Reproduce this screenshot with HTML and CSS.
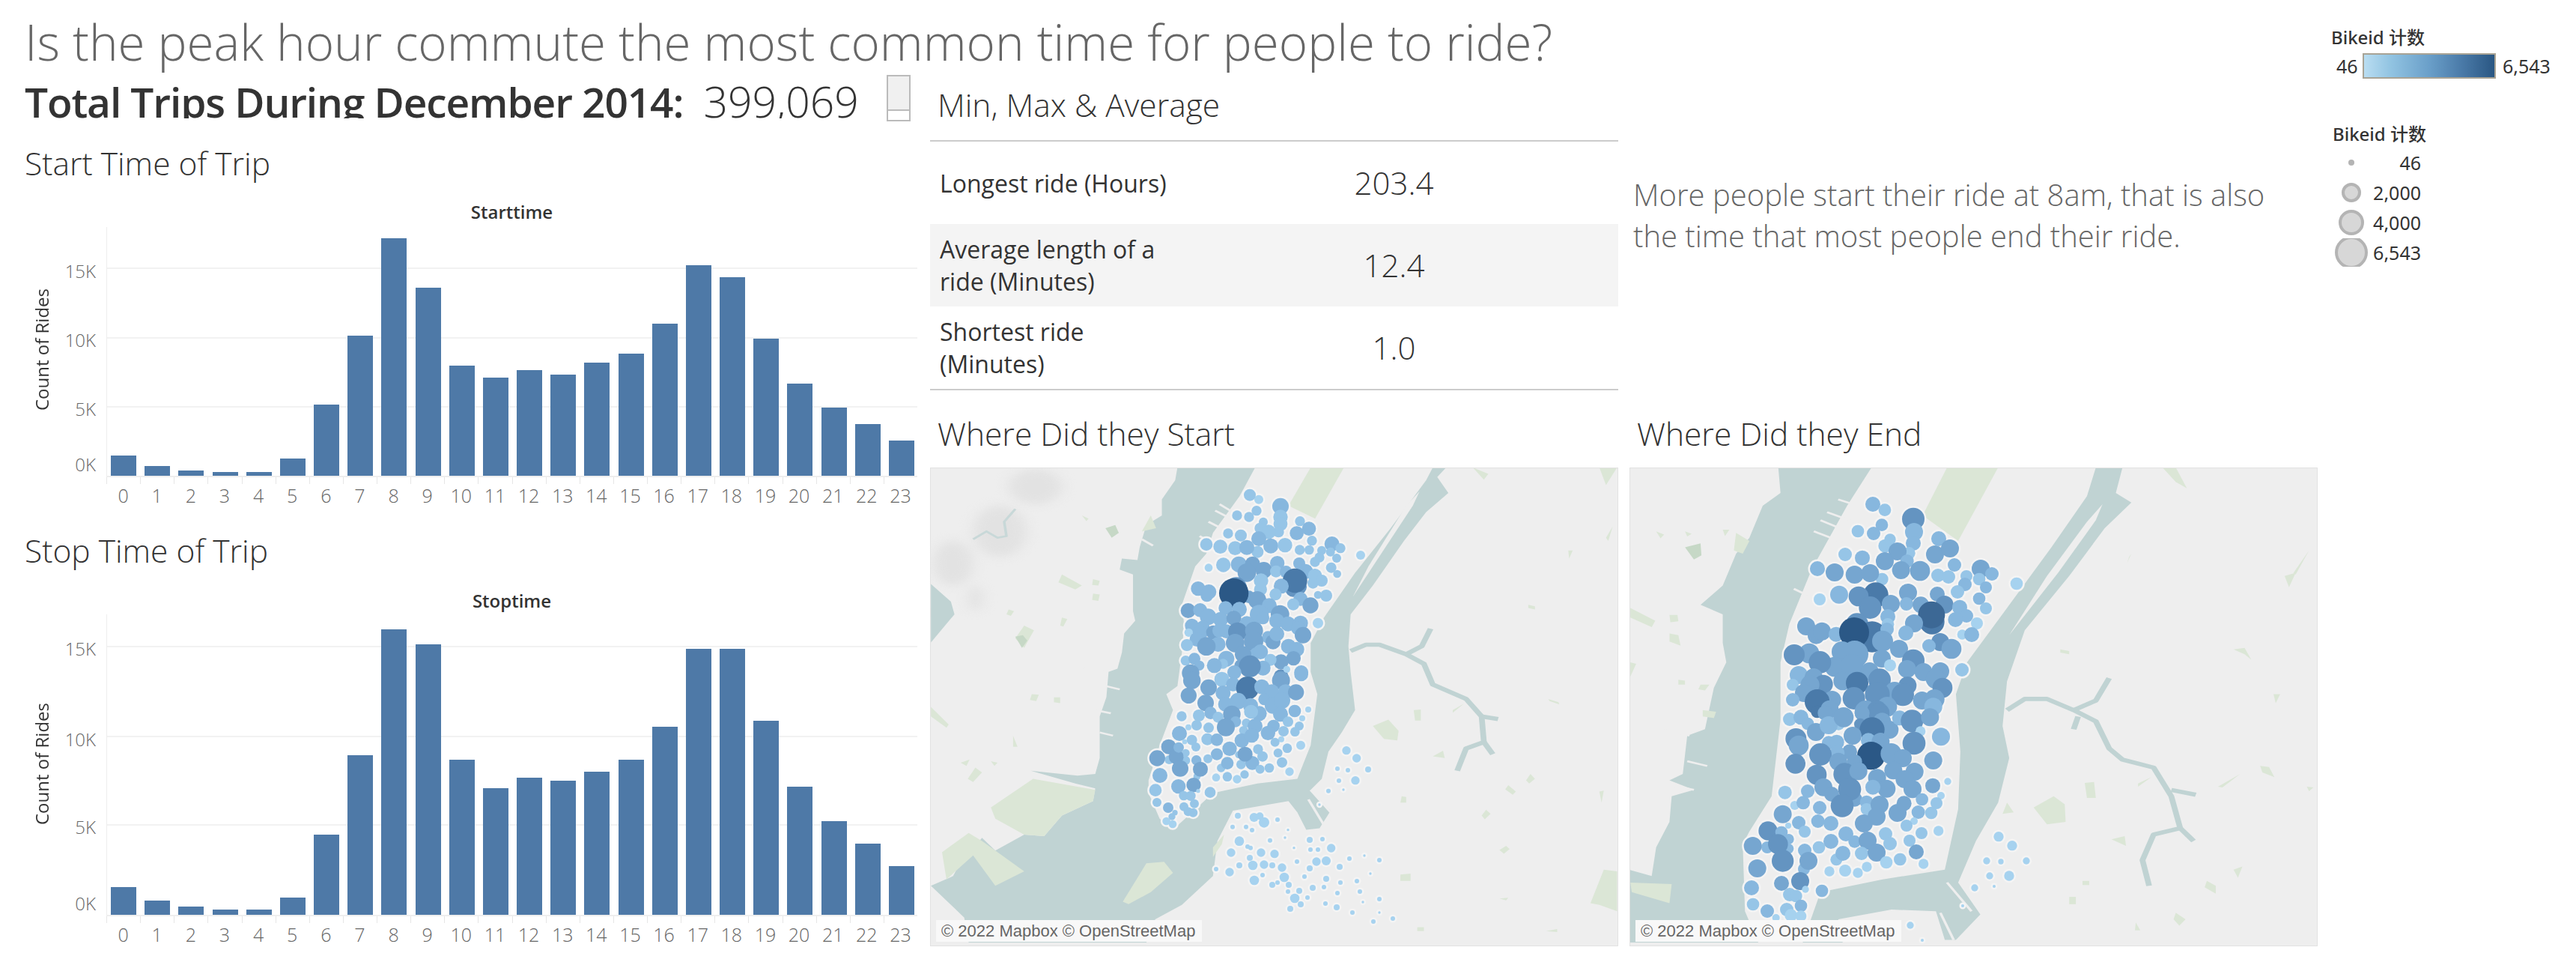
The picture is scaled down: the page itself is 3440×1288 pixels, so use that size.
FILE: index.html
```html
<!DOCTYPE html>
<html lang="en">
<head>
<meta charset="utf-8">
<title>Citi Bike December 2014</title>
<link rel="stylesheet" href="styles.css">
</head>
<body>
<div class="dashboard">
  <main class="main">
    <h1 class="title">Is the peak hour commute the most common time for people to ride?</h1>
    <div class="columns">
      <section class="col-left">
        <div class="total-row">
          <div class="total-text"><b>Total Trips During December 2014:</b><span class="total-num">399,069</span></div>
          <div class="widget"><div class="widget-top"></div></div>
        </div>
        <h2 class="heading h-start">Start Time of Trip</h2>
        <div class="chart-title ct-start">Starttime</div>
        <div class="chart chart-a">
          <div class="y-title"><span>Count of Rides</span></div>
          <div class="y-labels">
            <span style="bottom:256px">15K</span><span style="bottom:164px">10K</span><span style="bottom:72px">5K</span><span style="bottom:-2px">0K</span>
          </div>
          <div class="plot">
            <i class="grid" style="bottom:276px"></i><i class="grid" style="bottom:183px"></i><i class="grid" style="bottom:91px"></i>
            <div class="bars">
              <i style="height:27px"></i><i style="height:13px"></i><i style="height:7px"></i><i style="height:5px"></i><i style="height:5px"></i><i style="height:23px"></i><i style="height:95px"></i><i style="height:187px"></i><i style="height:317px"></i><i style="height:251px"></i><i style="height:147px"></i><i style="height:131px"></i><i style="height:141px"></i><i style="height:135px"></i><i style="height:151px"></i><i style="height:163px"></i><i style="height:203px"></i><i style="height:281px"></i><i style="height:265px"></i><i style="height:183px"></i><i style="height:123px"></i><i style="height:91px"></i><i style="height:69px"></i><i style="height:47px"></i>
            </div>
            <div class="x-labels"><span>0</span><span>1</span><span>2</span><span>3</span><span>4</span><span>5</span><span>6</span><span>7</span><span>8</span><span>9</span><span>10</span><span>11</span><span>12</span><span>13</span><span>14</span><span>15</span><span>16</span><span>17</span><span>18</span><span>19</span><span>20</span><span>21</span><span>22</span><span>23</span></div>
          </div>
        </div>
        <h2 class="heading h-stop">Stop Time of Trip</h2>
        <div class="chart-title ct-stop">Stoptime</div>
        <div class="chart chart-b">
          <div class="y-title"><span>Count of Rides</span></div>
          <div class="y-labels">
            <span style="bottom:338px">15K</span><span style="bottom:217px">10K</span><span style="bottom:100px">5K</span><span style="bottom:-2px">0K</span>
          </div>
          <div class="plot">
            <i class="grid" style="bottom:357px"></i><i class="grid" style="bottom:237px"></i><i class="grid" style="bottom:119px"></i>
            <div class="bars">
              <i style="height:37px"></i><i style="height:19px"></i><i style="height:11px"></i><i style="height:7px"></i><i style="height:7px"></i><i style="height:23px"></i><i style="height:107px"></i><i style="height:213px"></i><i style="height:381px"></i><i style="height:361px"></i><i style="height:207px"></i><i style="height:169px"></i><i style="height:183px"></i><i style="height:179px"></i><i style="height:191px"></i><i style="height:207px"></i><i style="height:251px"></i><i style="height:355px"></i><i style="height:355px"></i><i style="height:259px"></i><i style="height:171px"></i><i style="height:125px"></i><i style="height:95px"></i><i style="height:65px"></i>
            </div>
            <div class="x-labels"><span>0</span><span>1</span><span>2</span><span>3</span><span>4</span><span>5</span><span>6</span><span>7</span><span>8</span><span>9</span><span>10</span><span>11</span><span>12</span><span>13</span><span>14</span><span>15</span><span>16</span><span>17</span><span>18</span><span>19</span><span>20</span><span>21</span><span>22</span><span>23</span></div>
          </div>
        </div>
      </section>

      <section class="col-mid">
        <h2 class="heading h-minmax">Min, Max &amp; Average</h2>
        <div class="stats">
          <div class="stat"><div class="stat-label">Longest ride (Hours)</div><div class="stat-value">203.4</div></div>
          <div class="stat stat-alt"><div class="stat-label">Average length of a ride (Minutes)</div><div class="stat-value">12.4</div></div>
          <div class="stat"><div class="stat-label">Shortest ride (Minutes)</div><div class="stat-value">1.0</div></div>
        </div>
        <h2 class="heading h-where">Where Did they Start</h2>
        <div class="map">
          <svg class="map-svg" viewBox="0 0 919 638" aria-label="Start stations map">
            <defs>
              <g id="start-a" transform="translate(258,16) scale(.33333)">
                <circle class="a" cx="543" cy="80" r="18"/><circle class="b" cx="507" cy="62" r="24"/><circle class="c" cx="630" cy="107" r="33"/><circle class="b" cx="534" cy="125" r="20"/><circle class="b" cx="456" cy="144" r="20"/><circle class="b" cx="504" cy="150" r="20"/><circle class="b" cx="630" cy="150" r="29"/><circle class="b" cx="630" cy="178" r="28"/><circle class="b" cx="561" cy="170" r="18"/><circle class="b" cx="708" cy="167" r="20"/><circle class="b" cx="548" cy="195" r="22"/><circle class="b" cx="622" cy="210" r="22"/><circle class="b" cx="582" cy="210" r="29"/><circle class="c" cx="744" cy="197" r="28"/><circle class="c" cx="695" cy="215" r="28"/><circle class="b" cx="420" cy="216" r="20"/><circle class="b" cx="471" cy="224" r="24"/><circle class="c" cx="543" cy="237" r="30"/><circle class="b" cx="756" cy="245" r="20"/><circle class="c" cx="836" cy="258" r="30"/><circle class="b" cx="333" cy="260" r="25"/><circle class="b" cx="389" cy="269" r="28"/><circle class="b" cx="538" cy="290" r="24"/><circle class="b" cx="448" cy="275" r="28"/><circle class="c" cx="495" cy="272" r="30"/><circle class="c" cx="591" cy="266" r="30"/><circle class="b" cx="648" cy="263" r="29"/><circle class="b" cx="707" cy="282" r="20"/><circle class="b" cx="745" cy="282" r="19"/><circle class="b" cx="795" cy="284" r="18"/><circle class="b" cx="870" cy="275" r="20"/><circle class="b" cx="830" cy="290" r="18"/><circle class="b" cx="855" cy="315" r="18"/><circle class="a" cx="951" cy="303" r="18"/><circle class="b" cx="786" cy="312" r="20"/><circle class="b" cx="768" cy="330" r="20"/><circle class="a" cx="342" cy="353" r="16"/><circle class="b" cx="401" cy="342" r="29"/><circle class="c" cx="463" cy="340" r="32"/><circle class="d" cx="518" cy="338" r="30"/><circle class="c" cx="617" cy="335" r="29"/><circle class="c" cx="705" cy="336" r="24"/><circle class="d" cx="495" cy="373" r="37"/><circle class="d" cx="563" cy="363" r="33"/><circle class="b" cx="612" cy="368" r="24"/><circle class="c" cx="652" cy="370" r="25"/><circle class="c" cx="730" cy="368" r="30"/><circle class="b" cx="833" cy="353" r="21"/><circle class="b" cx="857" cy="378" r="16"/><circle class="b" cx="768" cy="385" r="28"/><circle class="b" cx="760" cy="415" r="22"/><circle class="b" cx="795" cy="405" r="24"/><circle class="e" cx="680" cy="440" r="30"/><circle class="e" cx="705" cy="430" r="30"/><circle class="f" cx="688" cy="405" r="49"/><circle class="b" cx="552" cy="405" r="29"/><circle class="c" cx="633" cy="427" r="30"/><circle class="c" cx="300" cy="437" r="29"/><circle class="c" cx="335" cy="465" r="25"/><circle class="c" cx="343" cy="450" r="30"/><circle class="e" cx="452" cy="435" r="44"/><circle class="b" cx="550" cy="440" r="26"/><circle class="b" cx="610" cy="460" r="24"/><circle class="b" cx="780" cy="462" r="16"/><circle class="b" cx="813" cy="465" r="24"/><circle class="d" cx="503" cy="470" r="25"/><circle class="g" cx="443" cy="455" r="59"/><circle class="d" cx="537" cy="483" r="36"/><circle class="c" cx="710" cy="478" r="28"/><circle class="b" cx="681" cy="500" r="24"/><circle class="d" cx="750" cy="504" r="32"/><circle class="c" cx="585" cy="505" r="30"/><circle class="d" cx="628" cy="540" r="37"/><circle class="d" cx="260" cy="525" r="30"/><circle class="c" cx="308" cy="523" r="28"/><circle class="c" cx="340" cy="550" r="33"/><circle class="c" cx="410" cy="515" r="28"/><circle class="c" cx="465" cy="520" r="30"/><circle class="c" cx="390" cy="560" r="30"/><circle class="d" cx="443" cy="555" r="30"/><circle class="c" cx="545" cy="540" r="38"/><circle class="c" cx="495" cy="575" r="28"/><circle class="c" cx="560" cy="555" r="25"/><circle class="c" cx="615" cy="566" r="30"/><circle class="c" cx="660" cy="578" r="30"/><circle class="c" cx="710" cy="575" r="30"/><circle class="a" cx="780" cy="575" r="21"/><circle class="c" cx="275" cy="585" r="28"/><circle class="c" cx="320" cy="590" r="26"/><circle class="a" cx="262" cy="613" r="17"/><circle class="c" cx="308" cy="615" r="30"/><circle class="d" cx="360" cy="612" r="28"/><circle class="c" cx="295" cy="640" r="29"/><circle class="c" cx="385" cy="605" r="28"/><circle class="c" cx="413" cy="608" r="28"/><circle class="e" cx="458" cy="610" r="38"/><circle class="d" cx="524" cy="605" r="36"/><circle class="c" cx="580" cy="632" r="25"/><circle class="d" cx="600" cy="650" r="30"/><circle class="c" cx="615" cy="618" r="30"/><circle class="c" cx="700" cy="595" r="28"/><circle class="d" cx="720" cy="623" r="33"/><circle class="d" cx="448" cy="655" r="37"/><circle class="d" cx="522" cy="648" r="39"/><circle class="c" cx="380" cy="660" r="30"/><circle class="d" cx="333" cy="668" r="37"/><circle class="b" cx="255" cy="663" r="24"/><circle class="c" cx="662" cy="668" r="30"/><circle class="c" cx="695" cy="680" r="30"/><circle class="c" cx="530" cy="695" r="22"/><circle class="c" cx="550" cy="690" r="30"/><circle class="d" cx="480" cy="700" r="33"/><circle class="d" cx="682" cy="716" r="29"/><circle class="d" cx="632" cy="730" r="30"/><circle class="b" cx="590" cy="722" r="24"/><circle class="b" cx="250" cy="725" r="20"/><circle class="c" cx="285" cy="718" r="24"/><circle class="c" cx="413" cy="718" r="32"/><circle class="b" cx="400" cy="738" r="20"/><circle class="c" cx="305" cy="745" r="20"/><circle class="c" cx="365" cy="745" r="30"/><circle class="d" cx="470" cy="745" r="25"/><circle class="c" cx="560" cy="755" r="30"/><circle class="e" cx="507" cy="748" r="44"/><circle class="d" cx="270" cy="775" r="35"/><circle class="c" cx="445" cy="772" r="28"/><circle class="c" cx="713" cy="772" r="28"/><circle class="e" cx="632" cy="790" r="30"/><circle class="a" cx="655" cy="760" r="14"/>
              </g>
              <g id="start-b" transform="translate(258,276) scale(.33333)">
                <circle class="d" cx="275" cy="25" r="35"/><circle class="d" cx="342" cy="53" r="33"/><circle class="b" cx="395" cy="20" r="30"/><circle class="c" cx="400" cy="75" r="30"/><circle class="d" cx="262" cy="85" r="32"/><circle class="d" cx="330" cy="115" r="33"/><circle class="c" cx="440" cy="40" r="28"/><circle class="c" cx="410" cy="120" r="30"/><circle class="f" cx="498" cy="55" r="46"/><circle class="c" cx="555" cy="50" r="30"/><circle class="d" cx="632" cy="25" r="36"/><circle class="c" cx="713" cy="0" r="28"/><circle class="c" cx="460" cy="107" r="33"/><circle class="c" cx="595" cy="70" r="30"/><circle class="c" cx="650" cy="70" r="30"/><circle class="d" cx="692" cy="72" r="32"/><circle class="c" cx="565" cy="100" r="24"/><circle class="c" cx="600" cy="125" r="33"/><circle class="c" cx="636" cy="105" r="33"/><circle class="c" cx="510" cy="125" r="30"/><circle class="c" cx="545" cy="157" r="30"/><circle class="b" cx="512" cy="150" r="28"/><circle class="c" cx="687" cy="147" r="25"/><circle class="a" cx="741" cy="141" r="12"/><circle class="c" cx="630" cy="160" r="30"/><circle class="d" cx="435" cy="160" r="35"/><circle class="c" cx="350" cy="155" r="25"/><circle class="b" cx="303" cy="165" r="24"/><circle class="b" cx="380" cy="172" r="22"/><circle class="b" cx="234" cy="168" r="20"/><circle class="a" cx="717" cy="176" r="12"/><circle class="b" cx="660" cy="190" r="21"/><circle class="b" cx="493" cy="195" r="18"/><circle class="c" cx="450" cy="190" r="22"/><circle class="a" cx="261" cy="212" r="12"/><circle class="b" cx="294" cy="204" r="21"/><circle class="b" cx="342" cy="214" r="21"/><circle class="d" cx="411" cy="212" r="36"/><circle class="b" cx="482" cy="225" r="18"/><circle class="c" cx="528" cy="207" r="30"/><circle class="c" cx="602" cy="207" r="25"/><circle class="b" cx="705" cy="207" r="18"/><circle class="c" cx="225" cy="237" r="30"/><circle class="b" cx="642" cy="228" r="21"/><circle class="b" cx="688" cy="230" r="19"/><circle class="c" cx="580" cy="235" r="29"/><circle class="c" cx="475" cy="265" r="29"/><circle class="c" cx="515" cy="245" r="29"/><circle class="a" cx="633" cy="260" r="12"/><circle class="b" cx="608" cy="272" r="18"/><circle class="b" cx="275" cy="263" r="21"/><circle class="b" cx="337" cy="260" r="24"/><circle class="c" cx="375" cy="262" r="25"/><circle class="a" cx="246" cy="270" r="10"/><circle class="d" cx="182" cy="290" r="30"/><circle class="b" cx="184" cy="342" r="18"/><circle class="b" cx="250" cy="315" r="16"/><circle class="b" cx="250" cy="345" r="18"/><circle class="d" cx="212" cy="330" r="30"/><circle class="c" cx="222" cy="293" r="21"/><circle class="b" cx="291" cy="291" r="18"/><circle class="c" cx="426" cy="298" r="29"/><circle class="a" cx="711" cy="284" r="18"/><circle class="b" cx="657" cy="296" r="19"/><circle class="b" cx="540" cy="300" r="20"/><circle class="b" cx="620" cy="315" r="18"/><circle class="d" cx="136" cy="336" r="32"/><circle class="c" cx="375" cy="320" r="24"/><circle class="b" cx="462" cy="322" r="14"/><circle class="b" cx="339" cy="338" r="18"/><circle class="b" cx="558" cy="329" r="21"/><circle class="b" cx="472" cy="361" r="19"/><circle class="c" cx="517" cy="355" r="28"/><circle class="d" cx="488" cy="320" r="30"/><circle class="c" cx="293" cy="344" r="20"/><circle class="b" cx="636" cy="353" r="21"/><circle class="b" cx="392" cy="375" r="17"/><circle class="c" cx="417" cy="356" r="25"/><circle class="b" cx="295" cy="410" r="14"/><circle class="d" cx="228" cy="377" r="33"/><circle class="d" cx="309" cy="380" r="30"/><circle class="b" cx="585" cy="375" r="19"/><circle class="b" cx="548" cy="380" r="18"/><circle class="c" cx="147" cy="405" r="30"/><circle class="a" cx="666" cy="390" r="17"/><circle class="b" cx="417" cy="410" r="19"/><circle class="b" cx="486" cy="401" r="17"/><circle class="a" cx="456" cy="420" r="17"/><circle class="a" cx="372" cy="413" r="16"/><circle class="c" cx="221" cy="449" r="29"/><circle class="d" cx="282" cy="443" r="29"/><circle class="b" cx="129" cy="464" r="25"/><circle class="b" cx="348" cy="473" r="22"/><circle class="a" cx="300" cy="467" r="8"/><circle class="b" cx="242" cy="486" r="19"/><circle class="b" cx="270" cy="487" r="20"/><circle class="b" cx="135" cy="513" r="18"/><circle class="b" cx="285" cy="518" r="18"/><circle class="c" cx="180" cy="534" r="21"/><circle class="b" cx="243" cy="530" r="18"/><circle class="b" cx="260" cy="550" r="18"/><circle class="b" cx="280" cy="554" r="18"/><circle class="b" cx="207" cy="554" r="11"/><circle class="b" cx="195" cy="570" r="14"/><circle class="a" cx="173" cy="588" r="16"/><circle class="a" cx="198" cy="600" r="16"/>
                <circle class="a" cx="894" cy="305" r="17"/><circle class="a" cx="935" cy="336" r="17"/><circle class="a" cx="981" cy="381" r="12"/><circle class="a" cx="858" cy="378" r="9"/><circle class="a" cx="900" cy="384" r="9"/><circle class="a" cx="864" cy="426" r="9"/><circle class="a" cx="930" cy="425" r="17"/><circle class="a" cx="822" cy="467" r="9"/><circle class="a" cx="882" cy="462" r="5"/><circle class="a" cx="786" cy="522" r="5"/><circle class="a" cx="459" cy="566" r="12"/><circle class="a" cx="524" cy="573" r="18"/><circle class="a" cx="547" cy="568" r="15"/><circle class="a" cx="564" cy="593" r="21"/><circle class="a" cx="618" cy="582" r="9"/><circle class="a" cx="438" cy="611" r="9"/><circle class="a" cx="492" cy="611" r="9"/><circle class="a" cx="516" cy="624" r="9"/><circle class="a" cx="660" cy="623" r="5"/><circle class="a" cx="648" cy="654" r="5"/><circle class="a" cx="588" cy="665" r="9"/><circle class="a" cx="465" cy="668" r="19"/><circle class="a" cx="747" cy="663" r="12"/><circle class="a" cx="798" cy="660" r="9"/><circle class="a" cx="498" cy="690" r="9"/><circle class="a" cx="510" cy="695" r="9"/><circle class="a" cx="684" cy="695" r="5"/><circle class="a" cx="750" cy="702" r="9"/><circle class="a" cx="780" cy="702" r="9"/><circle class="a" cx="833" cy="696" r="17"/><circle class="a" cx="432" cy="714" r="17"/><circle class="a" cx="552" cy="714" r="17"/><circle class="a" cx="606" cy="719" r="17"/><circle class="a" cx="507" cy="735" r="12"/><circle class="a" cx="696" cy="750" r="9"/><circle class="a" cx="774" cy="750" r="17"/><circle class="a" cx="813" cy="747" r="18"/><circle class="a" cx="906" cy="738" r="9"/><circle class="a" cx="966" cy="726" r="5"/><circle class="a" cx="1026" cy="744" r="9"/><circle class="a" cx="465" cy="765" r="12"/><circle class="a" cx="519" cy="765" r="19"/><circle class="a" cx="564" cy="762" r="17"/><circle class="a" cx="597" cy="765" r="12"/><circle class="a" cx="636" cy="774" r="17"/><circle class="a" cx="372" cy="780" r="9"/><circle class="a" cx="747" cy="777" r="12"/><circle class="a" cx="867" cy="771" r="12"/><circle class="a" cx="426" cy="792" r="17"/><circle class="a" cx="558" cy="804" r="9"/><circle class="a" cx="645" cy="813" r="19"/><circle class="a" cx="726" cy="810" r="9"/><circle class="a" cx="813" cy="819" r="12"/><circle class="a" cx="990" cy="798" r="5"/><circle class="a" cx="525" cy="825" r="19"/><circle class="a" cx="618" cy="834" r="9"/><circle class="a" cx="597" cy="843" r="12"/><circle class="a" cx="663" cy="843" r="12"/><circle class="a" cx="759" cy="855" r="12"/><circle class="a" cx="804" cy="852" r="9"/><circle class="a" cx="870" cy="834" r="9"/><circle class="a" cx="936" cy="828" r="9"/><circle class="a" cx="660" cy="870" r="9"/><circle class="a" cx="705" cy="867" r="12"/><circle class="a" cx="858" cy="876" r="9"/><circle class="a" cx="948" cy="870" r="9"/><circle class="a" cx="687" cy="897" r="19"/><circle class="a" cx="738" cy="894" r="9"/><circle class="a" cx="1026" cy="900" r="9"/><circle class="a" cx="960" cy="912" r="5"/><circle class="a" cx="810" cy="918" r="9"/><circle class="a" cx="711" cy="921" r="12"/><circle class="a" cx="669" cy="939" r="12"/><circle class="a" cx="855" cy="933" r="12"/><circle class="a" cx="918" cy="954" r="9"/><circle class="a" cx="1026" cy="954" r="5"/><circle class="a" cx="1080" cy="978" r="9"/><circle class="a" cx="1002" cy="990" r="9"/>
              </g>
            </defs>
            <g transform="translate(-1.8,-4.3) scale(.5931,.4261)">
              <g class="shade">
                <ellipse cx="240" cy="70" rx="60" ry="55"/><ellipse cx="160" cy="210" rx="60" ry="80"/><ellipse cx="55" cy="310" rx="45" ry="70"/><ellipse cx="105" cy="420" rx="15" ry="40"/>
              </g>
              <polygon class="water" points="560,10 555,50 525,110 525,160 490,190 475,260 470,300 435,295 430,330 460,345 460,460 465,490 440,530 435,590 425,640 405,650 400,730 385,790 385,920 375,970 335,975 230,960 330,1000 375,1015 370,1055 300,1100 260,1165 215,1160 150,1210 120,1170 90,1220 70,1250 55,1290 5,1320 80,1420 90,1498 490,1498 510,1425 570,1380 640,1290 650,1180 685,1085 810,1055 830,1090 850,1145 880,1140 905,1085 860,1020 885,985 900,900 930,840 960,770 950,650 945,570 950,470 1000,380 1070,240 1120,150 1170,90 1145,40 1165,10"/>
              <polygon class="land" points="735,10 700,100 640,215 625,280 600,320 570,440 575,500 570,590 560,695 535,720 550,770 520,880 495,990 495,1030 520,1110 550,1145 640,1030 740,1000 830,985 860,880 875,720 860,650 860,560 890,480 960,340 1040,200 1120,50 1135,10"/>
              <polygon class="land" points="1105,85 1090,130 1000,320 955,415 990,320 1075,130"/>
              <polygon class="water" points="5,375 50,430 58,470 5,558"/>
              <g class="creek">
                <polyline points="950,585 985,565 1015,565 1075,595 1115,625 1135,690 1210,735 1245,790 1250,870 1210,890 1190,960"/>
                <polyline points="1075,595 1110,570 1130,515"/>
                <polyline points="1250,870 1270,908"/>
                <polyline points="1245,790 1282,798"/>
                <polyline class="thin" points="100,235 130,210 155,230 175,225 170,180 195,140"/>
              </g>
              <g class="piers">
                <polyline points="655,125 685,150"/><polyline points="645,145 680,170"/><polyline points="630,180 665,205"/><polyline points="610,225 640,250"/><polyline points="480,235 505,255"/><polyline points="350,640 400,650"/><polyline points="400,695 430,705"/><polyline points="375,770 410,780"/><polyline points="385,840 415,850"/><polyline points="860,1020 905,1090"/><polyline points="855,1050 890,1130"/>
              </g>
              <g class="park">
                <polygon points="860,10 935,10 870,170 810,130"/><polygon points="437,1370 490,1250 530,1245 550,1280 500,1340 450,1378"/><polygon points="140,1075 235,985 375,1020 370,1055 300,1100 260,1165 215,1160 150,1110"/><polygon points="30,1215 90,1155 120,1180 215,1275 150,1320 100,1225 40,1300"/><polygon points="5,760 45,815 40,825 5,790"/><polygon points="300,345 345,380 330,392 292,370"/><polygon points="345,160 360,170 355,178"/><polygon points="215,505 237,520 215,575 195,545"/><polygon points="180,455 192,460 185,475 175,470"/><polygon points="300,480 312,485 303,508 296,505"/><polygon points="370,360 385,365 382,380 368,378"/><polygon points="370,405 385,408 382,428 368,425"/><polygon points="232,720 248,722 242,742 228,738"/><polygon points="282,730 296,730 296,748 282,745"/><polygon points="190,850 200,885 190,885"/><polygon points="72,935 92,925 85,945"/><polygon points="140,930 155,935 148,945"/><polygon points="105,950 120,965 100,995 88,985"/><polygon points="500,160 512,200 480,210"/><polygon points="1000,820 1035,800 1058,835 1055,865 1025,860"/><polygon points="1092,770 1108,768 1108,803 1095,803"/><polygon points="1180,770 1205,750 1180,778"/><polygon points="1135,915 1158,897 1162,920"/><polygon points="1395,735 1418,745 1420,752 1398,742"/><polygon points="1350,440 1365,445 1365,455 1350,450"/><polygon points="1305,1005 1322,1025 1315,1035 1298,1018"/><polygon points="1355,970 1365,985 1352,1000 1345,990"/><polygon points="1255,1082 1265,1095 1252,1112 1245,1100"/><polygon points="1300,1195 1308,1205 1295,1220 1285,1208"/><polygon points="1065,1040 1075,1042 1075,1060 1062,1060"/><polygon points="1062,1285 1085,1282 1085,1305 1062,1305"/><polygon points="1490,1375 1520,1270 1550,1275 1550,1400 1510,1380"/><polygon points="1510,1025 1520,1022 1515,1060"/><polygon points="1440,270 1450,270 1442,295"/><polygon points="1525,230 1540,195 1530,240"/><polygon points="1510,10 1550,10 1525,65"/><polygon points="1225,10 1260,30 1250,48"/><polygon points="640,1200 665,1160 660,1190 640,1230"/><polygon points="1285,1360 1305,1358 1300,1366"/><polygon points="1390,1462 1415,1456 1415,1465"/><polygon points="1100,1450 1115,1450 1115,1462 1100,1462"/><polygon class="park-dark" points="398,200 420,190 428,215 412,230"/><polygon class="park-dark" points="195,540 212,535 222,552 210,575"/>
              </g>
            </g>
            <use href="#start-a" class="halo"/><use href="#start-b" class="halo"/>
            <use href="#start-a"/><use href="#start-b"/>
          </svg>
          <div class="attrib">© 2022 Mapbox © OpenStreetMap</div>
        </div>
      </section>

      <section class="col-right">
        <p class="note">More people start their ride at 8am, that is also the time that most people end their ride.</p>
        <h2 class="heading h-where">Where Did they End</h2>
        <div class="map">
          <svg class="map-svg" viewBox="0 0 919 638" aria-label="End stations map">
            <defs>
              <g id="end-a" transform="translate(134,26) scale(.33333)">
                <circle class="c" cx="573" cy="69" r="30"/><circle class="b" cx="621" cy="92" r="25"/><circle class="e" cx="735" cy="128" r="45"/><circle class="c" cx="609" cy="152" r="25"/><circle class="c" cx="738" cy="180" r="36"/><circle class="b" cx="513" cy="177" r="25"/><circle class="c" cx="576" cy="186" r="27"/><circle class="b" cx="642" cy="210" r="23"/><circle class="b" cx="622" cy="236" r="27"/><circle class="c" cx="735" cy="225" r="30"/><circle class="c" cx="837" cy="207" r="30"/><circle class="d" cx="822" cy="270" r="36"/><circle class="d" cx="882" cy="246" r="36"/><circle class="b" cx="718" cy="265" r="25"/><circle class="d" cx="672" cy="258" r="36"/><circle class="b" cx="462" cy="270" r="27"/><circle class="c" cx="531" cy="284" r="30"/><circle class="c" cx="710" cy="297" r="27"/><circle class="d" cx="621" cy="297" r="36"/><circle class="c" cx="900" cy="312" r="27"/><circle class="d" cx="1005" cy="327" r="36"/><circle class="c" cx="1050" cy="348" r="27"/><circle class="c" cx="351" cy="327" r="30"/><circle class="d" cx="420" cy="342" r="36"/><circle class="b" cx="610" cy="369" r="25"/><circle class="d" cx="500" cy="351" r="36"/><circle class="d" cx="562" cy="345" r="36"/><circle class="d" cx="686" cy="333" r="36"/><circle class="d" cx="762" cy="336" r="40"/><circle class="b" cx="834" cy="354" r="27"/><circle class="b" cx="876" cy="360" r="27"/><circle class="b" cx="948" cy="357" r="24"/><circle class="c" cx="942" cy="390" r="27"/><circle class="b" cx="999" cy="369" r="25"/><circle class="a" cx="1149" cy="387" r="25"/><circle class="c" cx="1026" cy="402" r="24"/><circle class="b" cx="912" cy="420" r="27"/><circle class="c" cx="438" cy="431" r="36"/><circle class="f" cx="585" cy="432" r="50"/><circle class="e" cx="516" cy="438" r="40"/><circle class="a" cx="360" cy="450" r="24"/><circle class="d" cx="714" cy="423" r="36"/><circle class="d" cx="831" cy="429" r="30"/><circle class="c" cx="999" cy="447" r="25"/><circle class="e" cx="562" cy="483" r="45"/><circle class="d" cx="645" cy="468" r="36"/><circle class="c" cx="708" cy="468" r="27"/><circle class="d" cx="765" cy="472" r="33"/><circle class="e" cx="860" cy="471" r="36"/><circle class="c" cx="921" cy="482" r="30"/><circle class="b" cx="1026" cy="486" r="24"/><circle class="e" cx="510" cy="550" r="45"/><circle class="f" cx="570" cy="600" r="62"/><circle class="f" cx="810" cy="540" r="50"/><circle class="h" cx="808" cy="512" r="54"/><circle class="c" cx="633" cy="519" r="30"/><circle class="c" cx="948" cy="516" r="27"/><circle class="c" cx="904" cy="531" r="30"/><circle class="b" cx="633" cy="550" r="25"/><circle class="c" cx="630" cy="570" r="27"/><circle class="d" cx="738" cy="546" r="36"/><circle class="a" cx="990" cy="546" r="24"/><circle class="d" cx="306" cy="558" r="36"/><circle class="d" cx="346" cy="595" r="34"/><circle class="d" cx="369" cy="578" r="36"/><circle class="c" cx="426" cy="590" r="30"/><circle class="g" cx="498" cy="582" r="60"/><circle class="c" cx="705" cy="585" r="30"/><circle class="a" cx="931" cy="591" r="20"/><circle class="c" cx="969" cy="591" r="30"/><circle class="d" cx="612" cy="617" r="42"/><circle class="e" cx="843" cy="621" r="36"/><circle class="c" cx="798" cy="636" r="27"/><circle class="d" cx="888" cy="648" r="40"/><circle class="d" cx="678" cy="648" r="36"/><circle class="d" cx="318" cy="666" r="40"/><circle class="e" cx="258" cy="672" r="42"/><circle class="d" cx="450" cy="660" r="42"/><circle class="d" cx="500" cy="670" r="55"/><circle class="d" cx="609" cy="687" r="36"/><circle class="a" cx="642" cy="714" r="24"/><circle class="e" cx="735" cy="695" r="45"/><circle class="d" cx="420" cy="720" r="40"/><circle class="e" cx="361" cy="702" r="45"/><circle class="d" cx="490" cy="715" r="45"/><circle class="d" cx="710" cy="729" r="36"/><circle class="d" cx="776" cy="741" r="36"/><circle class="d" cx="843" cy="738" r="36"/><circle class="b" cx="930" cy="732" r="27"/><circle class="c" cx="276" cy="753" r="36"/><circle class="d" cx="336" cy="762" r="36"/><circle class="d" cx="825" cy="768" r="40"/><circle class="d" cx="560" cy="738" r="36"/><circle class="b" cx="252" cy="792" r="24"/><circle class="e" cx="375" cy="790" r="38"/><circle class="d" cx="321" cy="792" r="38"/><circle class="d" cx="452" cy="777" r="37"/><circle class="f" cx="510" cy="785" r="45"/><circle class="e" cx="600" cy="772" r="45"/><circle class="e" cx="712" cy="795" r="36"/><circle class="e" cx="852" cy="804" r="40"/><circle class="d" cx="297" cy="825" r="36"/><circle class="c" cx="252" cy="852" r="27"/><circle class="e" cx="497" cy="846" r="45"/><circle class="d" cx="660" cy="820" r="40"/><circle class="e" cx="693" cy="832" r="45"/><circle class="e" cx="591" cy="830" r="50"/><circle class="d" cx="770" cy="855" r="36"/><circle class="d" cx="820" cy="850" r="40"/><circle class="d" cx="410" cy="852" r="36"/><circle class="f" cx="350" cy="860" r="50"/><circle class="c" cx="815" cy="880" r="36"/><circle class="d" cx="630" cy="880" r="40"/><circle class="d" cx="400" cy="890" r="36"/><circle class="d" cx="545" cy="900" r="45"/><circle class="e" cx="590" cy="895" r="40"/>
              </g>
              <g id="end-b" transform="translate(134,326) scale(.33333)">
                <circle class="e" cx="600" cy="5" r="40"/><circle class="d" cx="530" cy="5" r="30"/><circle class="f" cx="350" cy="0" r="25"/><circle class="d" cx="382" cy="5" r="30"/><circle class="b" cx="240" cy="30" r="27"/><circle class="c" cx="285" cy="22" r="30"/><circle class="c" cx="312" cy="48" r="25"/><circle class="d" cx="345" cy="81" r="36"/><circle class="b" cx="436" cy="50" r="24"/><circle class="c" cx="396" cy="54" r="36"/><circle class="d" cx="456" cy="22" r="40"/><circle class="e" cx="265" cy="108" r="42"/><circle class="d" cx="276" cy="135" r="40"/><circle class="e" cx="522" cy="50" r="24"/><circle class="d" cx="610" cy="40" r="36"/><circle class="d" cx="640" cy="72" r="36"/><circle class="f" cx="570" cy="72" r="50"/><circle class="c" cx="680" cy="25" r="30"/><circle class="e" cx="730" cy="37" r="45"/><circle class="d" cx="802" cy="22" r="36"/><circle class="a" cx="764" cy="78" r="20"/><circle class="c" cx="846" cy="100" r="36"/><circle class="d" cx="492" cy="96" r="36"/><circle class="c" cx="555" cy="115" r="30"/><circle class="d" cx="604" cy="120" r="36"/><circle class="e" cx="738" cy="126" r="46"/><circle class="c" cx="396" cy="124" r="27"/><circle class="c" cx="428" cy="122" r="30"/><circle class="d" cx="480" cy="160" r="30"/><circle class="c" cx="430" cy="165" r="30"/><circle class="e" cx="363" cy="171" r="45"/><circle class="g" cx="566" cy="176" r="56"/><circle class="d" cx="646" cy="168" r="42"/><circle class="d" cx="693" cy="186" r="36"/><circle class="d" cx="500" cy="200" r="30"/><circle class="d" cx="435" cy="200" r="36"/><circle class="d" cx="815" cy="195" r="36"/><circle class="e" cx="263" cy="208" r="40"/><circle class="d" cx="655" cy="235" r="36"/><circle class="e" cx="460" cy="250" r="45"/><circle class="d" cx="515" cy="238" r="36"/><circle class="d" cx="740" cy="240" r="36"/><circle class="e" cx="348" cy="252" r="40"/><circle class="d" cx="700" cy="270" r="36"/><circle class="d" cx="590" cy="265" r="36"/><circle class="d" cx="813" cy="296" r="30"/><circle class="a" cx="873" cy="279" r="14"/><circle class="d" cx="375" cy="302" r="36"/><circle class="d" cx="408" cy="330" r="30"/><circle class="d" cx="500" cy="350" r="30"/><circle class="e" cx="480" cy="310" r="46"/><circle class="d" cx="628" cy="308" r="36"/><circle class="c" cx="573" cy="302" r="30"/><circle class="d" cx="732" cy="310" r="36"/><circle class="b" cx="221" cy="323" r="27"/><circle class="c" cx="312" cy="318" r="27"/><circle class="a" cx="846" cy="336" r="15"/><circle class="e" cx="450" cy="376" r="46"/><circle class="c" cx="770" cy="351" r="25"/><circle class="b" cx="828" cy="366" r="24"/><circle class="a" cx="260" cy="375" r="18"/><circle class="c" cx="294" cy="364" r="27"/><circle class="c" cx="360" cy="384" r="27"/><circle class="c" cx="548" cy="362" r="27"/><circle class="b" cx="548" cy="390" r="24"/><circle class="d" cx="600" cy="372" r="36"/><circle class="d" cx="672" cy="405" r="36"/><circle class="d" cx="698" cy="367" r="30"/><circle class="d" cx="212" cy="410" r="36"/><circle class="d" cx="588" cy="420" r="36"/><circle class="c" cx="755" cy="402" r="27"/><circle class="b" cx="807" cy="405" r="25"/><circle class="d" cx="537" cy="447" r="36"/><circle class="c" cx="353" cy="438" r="27"/><circle class="c" cx="405" cy="447" r="30"/><circle class="c" cx="276" cy="444" r="27"/><circle class="a" cx="738" cy="438" r="15"/><circle class="b" cx="708" cy="456" r="24"/><circle class="a" cx="234" cy="456" r="12"/><circle class="e" cx="153" cy="477" r="38"/><circle class="c" cx="207" cy="483" r="25"/><circle class="b" cx="300" cy="480" r="24"/><circle class="c" cx="465" cy="489" r="30"/><circle class="b" cx="768" cy="486" r="24"/><circle class="b" cx="624" cy="489" r="27"/><circle class="a" cx="836" cy="477" r="20"/><circle class="c" cx="236" cy="510" r="21"/><circle class="b" cx="720" cy="516" r="24"/><circle class="b" cx="642" cy="528" r="27"/><circle class="c" cx="500" cy="520" r="25"/><circle class="c" cx="405" cy="519" r="30"/><circle class="d" cx="552" cy="516" r="36"/><circle class="c" cx="150" cy="543" r="24"/><circle class="c" cx="236" cy="548" r="20"/><circle class="e" cx="193" cy="530" r="40"/><circle class="b" cx="357" cy="543" r="25"/><circle class="d" cx="92" cy="537" r="36"/><circle class="c" cx="300" cy="555" r="27"/><circle class="d" cx="747" cy="561" r="30"/><circle class="b" cx="427" cy="592" r="24"/><circle class="c" cx="453" cy="567" r="30"/><circle class="b" cx="528" cy="567" r="27"/><circle class="d" cx="588" cy="564" r="36"/><circle class="c" cx="297" cy="630" r="24"/><circle class="e" cx="212" cy="597" r="44"/><circle class="d" cx="315" cy="597" r="36"/><circle class="b" cx="682" cy="591" r="25"/><circle class="a" cx="627" cy="603" r="25"/><circle class="d" cx="110" cy="627" r="36"/><circle class="a" cx="776" cy="609" r="20"/><circle class="a" cx="462" cy="636" r="24"/><circle class="a" cx="549" cy="621" r="20"/><circle class="a" cx="399" cy="639" r="20"/><circle class="a" cx="513" cy="645" r="20"/><circle class="e" cx="282" cy="678" r="36"/><circle class="d" cx="207" cy="687" r="30"/><circle class="c" cx="87" cy="705" r="30"/><circle class="c" cx="369" cy="717" r="25"/><circle class="a" cx="303" cy="711" r="14"/><circle class="b" cx="240" cy="732" r="27"/><circle class="b" cx="265" cy="738" r="25"/><circle class="b" cx="93" cy="771" r="25"/><circle class="c" cx="285" cy="777" r="25"/><circle class="b" cx="228" cy="792" r="27"/><circle class="c" cx="150" cy="798" r="27"/><circle class="a" cx="245" cy="815" r="25"/><circle class="a" cx="285" cy="818" r="22"/><circle class="a" cx="185" cy="825" r="15"/>
                <circle class="a" cx="1077" cy="500" r="20"/><circle class="a" cx="1131" cy="536" r="20"/><circle class="a" cx="1029" cy="597" r="14"/><circle class="a" cx="1086" cy="600" r="11"/><circle class="a" cx="1188" cy="597" r="14"/><circle class="a" cx="1041" cy="657" r="14"/><circle class="a" cx="1119" cy="657" r="20"/><circle class="a" cx="981" cy="705" r="14"/><circle class="a" cx="1059" cy="699" r="6"/><circle class="a" cx="933" cy="777" r="6"/><circle class="a" cx="723" cy="855" r="14"/><circle class="a" cx="771" cy="915" r="6"/>
              </g>
            </defs>
            <g transform="translate(-5.9,-4.3) scale(.5931,.4261)">
              <polygon class="water" points="345,10 350,90 310,130 280,230 250,280 220,380 170,440 220,470 220,560 228,620 200,700 180,830 140,850 130,970 100,990 155,1020 105,1040 100,1120 70,1200 60,1290 10,1270 10,1498 490,1498 480,1425 600,1395 700,1400 720,1490 745,1490 800,1410 750,1310 790,1180 840,1060 865,920 850,820 860,680 900,520 1000,350 1080,200 1140,120 1105,90 1120,10"/>
              <polygon class="land" points="555,10 500,130 420,330 370,500 350,620 350,800 330,1040 280,1150 265,1190 270,1400 300,1498 400,1498 440,1340 580,1300 720,1270 750,1080 755,900 745,720 770,620 860,450 960,260 1040,100 1060,10"/>
              <polygon class="land" points="1075,125 1060,175 975,340 865,535 950,350 1040,180"/>
              <g class="creek">
                <polyline points="860,770 900,735 950,735 1010,770 1060,805 1090,890 1120,925 1190,950 1230,1040 1250,1140 1190,1160 1165,1240 1180,1320"/>
                <polyline points="1010,770 1060,740 1090,670"/>
                <polyline points="1230,1020 1285,1035"/>
                <polyline points="1250,1140 1280,1180"/>
                <polyline points="1020,790 1010,830"/>
              </g>
              <g class="piers">
                <polyline points="425,210 500,250"/><polyline points="440,175 510,215"/><polyline points="455,150 525,185"/><polyline points="480,110 525,130"/><polyline points="380,390 410,410"/><polyline points="80,830 145,850"/><polyline points="140,930 185,945"/><polyline points="105,1005 155,1020"/><polyline points="710,1405 740,1490"/><polyline points="725,1310 780,1400"/>
              </g>
              <g class="park">
                <polygon points="725,10 840,10 750,240 670,160"/><polygon points="12,450 68,490 60,510 12,480"/><polygon points="250,215 280,240 265,280 245,270"/><polygon points="100,472 118,472 120,492 102,495"/><polygon points="100,530 120,535 125,568 100,555"/><polygon points="120,675 135,678 135,690 120,690"/><polygon points="170,690 190,690 180,708 165,705"/><polygon points="175,770 205,775 200,795 175,790"/><polygon points="70,210 88,220 80,232"/><polygon points="135,210 150,218 140,226"/><polygon points="220,205 235,205 225,225"/><polygon points="12,620 25,625 12,665"/><polygon points="920,1075 965,1040 990,1065 992,1120 950,1128"/><polygon points="1035,998 1056,995 1060,1045 1040,1045"/><polygon points="1155,1000 1185,980 1155,1010"/><polygon points="1095,1175 1125,1165 1128,1195"/><polygon points="1430,945 1450,948 1462,980 1435,965"/><polygon points="1485,350 1510,340 1495,385"/><polygon points="1505,340 1540,270 1510,345"/><polygon points="1310,1305 1330,1320 1330,1345 1305,1325"/><polygon points="1370,1270 1390,1260 1380,1295"/><polygon points="1000,1355 1015,1355 1015,1378 1000,1378"/><polygon points="1240,1405 1262,1425 1248,1445 1235,1425"/><polygon points="1150,1435 1160,1460 1148,1460"/><polygon points="1030,1305 1045,1305 1045,1318 1030,1318"/><polygon points="1460,720 1475,720 1465,748"/><polygon points="1535,1010 1550,1012 1540,1024"/><polygon points="980,580 1000,585 1000,595 980,590"/><polygon points="1370,580 1395,575 1410,612 1395,595"/><polygon points="1335,1010 1385,970 1345,1012" /><polygon points="860,1060 875,1090 850,1095"/><polygon points="1135,290 1140,280 1130,310"/><polygon points="1210,10 1240,10 1265,75 1240,55"/><polygon points="12,1310 105,1315 100,1375 15,1340"/><polygon class="park-dark" points="135,260 170,248 172,285 155,298"/>
              </g>
            </g>
            <use href="#end-a" class="halo"/><use href="#end-b" class="halo"/>
            <use href="#end-a"/><use href="#end-b"/>
          </svg>
          <div class="attrib">© 2022 Mapbox © OpenStreetMap</div>
        </div>
      </section>
    </div>
  </main>

  <aside class="legends">
    <div class="legend-title">Bikeid 计数</div>
    <div class="color-legend">
      <span class="cl-min">46</span>
      <div class="ramp"></div>
      <span class="cl-max">6,543</span>
    </div>
    <div class="legend-title lt-size">Bikeid 计数</div>
    <div class="size-legend">
      <div class="size-row"><div class="dot-cell"><i class="dot d1"></i></div><span>46</span></div>
      <div class="size-row"><div class="dot-cell"><i class="dot d2"></i></div><span>2,000</span></div>
      <div class="size-row"><div class="dot-cell"><i class="dot d3"></i></div><span>4,000</span></div>
      <div class="size-row"><div class="dot-cell"><i class="dot d4"></i></div><span>6,543</span></div>
    </div>
  </aside>
</div>
</body>
</html>
```

FILE: styles.css
```css
* { box-sizing: border-box; }
html, body { margin: 0; padding: 0; background: #fff; }
body { font-family: "Open Sans", "Noto Sans CJK SC", sans-serif; color: #333; }
.dashboard { display: flex; width: 3440px; height: 1288px; overflow: hidden; }
.main { width: 3095px; flex: none; }
.title { margin: 0; height: 100px; padding: 14px 0 0 33px; font-size: 65.5px; line-height: 84px; font-weight: 300; color: #666; white-space: nowrap; }
.columns { display: flex; }
.col-left { width: 1242px; flex: none; }
.col-mid { width: 919px; flex: none; margin-right: 15px; }
.col-right { width: 919px; flex: none; }

.total-row { display: flex; height: 62px; padding-left: 33px; }
.total-text { width: 1151px; height: 58px; overflow: hidden; font-size: 55px; line-height: 71px; white-space: nowrap; color: #333; }
.total-text b { font-weight: 600; letter-spacing: -1.1px; }
.total-num { margin-left: 27px; font-size: 57px; font-weight: 300; }
.widget { width: 32px; height: 62px; border: 2px solid #bbb; background: #f0f0f0; display: flex; flex-direction: column; justify-content: flex-end; }
.widget-top { height: 14px; background: #fff; border-top: 2px solid #bbb; }

.heading { margin: 0; font-weight: 300; font-size: 42.5px; line-height: 54px; color: #333; white-space: nowrap; }
.h-start { padding: 29px 0 0 33px; height: 106px; }
.h-stop { padding: 0 0 0 33px; height: 79px; margin-top: 28px; }
.h-minmax { padding: 13px 0 0 10px; height: 87px; }
.h-where { padding: 31px 0 0 10px; height: 103px; }

.chart-title { width: 1225px; padding-left: 142px; text-align: center; font-size: 24px; line-height: 30px; font-weight: 600; color: #333; }
.ct-start { height: 35px; }
.ct-stop { height: 33px; }

.chart { display: flex; width: 1225px; }
.chart-a { height: 377px; }
.chart-b { height: 401px; }
.y-title { width: 74px; flex: none; display: flex; justify-content: flex-end; align-items: center; padding-right: 4px; }
.y-title span { writing-mode: vertical-rl; transform: rotate(180deg); font-size: 24px; line-height: 28px; font-weight: 400; color: #333; white-space: nowrap; }
.chart-a .y-title { height: 332px; padding-bottom: 6px; }
.chart-b .y-title { height: 401px; padding-bottom: 3px; }
.y-labels { width: 68px; flex: none; position: relative; font-size: 24px; line-height: 34px; font-weight: 300; color: #666; }
.chart-a .y-labels { height: 332px; }
.chart-b .y-labels { height: 401px; }
.y-labels span { position: absolute; right: 14px; }
.plot { flex: 1; position: relative; border-left: 1px solid #eee; }
.chart-a .plot { height: 332px; }
.chart-b .plot { height: 401px; }
.grid { position: absolute; left: 0; right: 0; height: 2px; background: #f2f2f2; }
.bars { position: absolute; left: 5px; right: 4px; bottom: 0; top: 0; display: flex; align-items: flex-end; justify-content: space-between; }
.bars i { display: block; width: 34px; background: #4e79a7; }
.x-labels { position: absolute; left: -1px; right: 0; top: 100%; display: grid; grid-template-columns: repeat(24, 1fr); border-top: 2px solid #eee; }
.x-labels span { height: 43px; padding-top: 7px; text-align: center; font-size: 25px; line-height: 34px; font-weight: 300; color: #666; background: linear-gradient(#e6e6e6, #e6e6e6) left top / 1px 9px no-repeat; }

.stats { border-top: 2px solid #ccc; border-bottom: 2px solid #ccc; height: 334px; display: grid; grid-template-rows: 110px 110px 110px; }
.stat { display: grid; grid-template-columns: 320px 1fr; align-items: center; }
.stat-alt { background: #f4f4f4; }
.stat-label { padding-left: 13px; font-size: 32px; line-height: 43px; font-weight: 500; color: #333; }
.stat-value { text-align: center; font-size: 42px; line-height: 56px; font-weight: 300; color: #333; }

.map { position: relative; width: 919px; height: 639px; border: 1px solid #e2e2e2; background: #eeeeee; overflow: hidden; }
.map-svg { display: block; width: 919px; height: 638px; position: absolute; left: -1px; top: -1px; }
.water { fill: #c0d3d3; }
.land { fill: #eeeeee; }
.shade { filter: blur(14px); }
.shade ellipse { fill: #e2e2e2; }
.creek polyline { fill: none; stroke: #c0d3d3; stroke-width: 13; stroke-linejoin: round; }
.creek polyline.thin { stroke-width: 6; stroke: #c8d8d8; }
.piers polyline { fill: none; stroke: #eeeeee; stroke-width: 6; }
.park polygon { fill: #dbe6d6; }
.park polygon.park-dark { fill: #c6d8c6; }
.halo { stroke: #f4f4f4; stroke-width: 15; }
.a { fill: #a6d2ef; }
.b { fill: #96c5e7; }
.c { fill: #87b7de; }
.d { fill: #76a6d0; }
.e { fill: #6494c1; }
.f { fill: #4a7aa9; }
.g { fill: #2b5886; }
.h { fill: #3c6895; }
.attrib { position: absolute; left: 7px; bottom: 5px; width: 355px; height: 29px; background: #f8f8f8; font-family: "Liberation Sans", Arial, sans-serif; font-size: 22px; line-height: 29px; padding-left: 7px; color: #666; white-space: nowrap; }

.note { margin: 0; height: 421px; padding: 132px 40px 0 5px; font-size: 40px; line-height: 55px; font-weight: 300; color: #666; }

.legends { flex: none; width: 345px; padding: 34px 0 0 18px; font-family: "Noto Sans", "Noto Sans CJK SC", sans-serif; }
.legend-title { font-size: 24px; line-height: 32px; font-weight: 500; color: #333; white-space: nowrap; }
.lt-size { margin-top: 58px; padding-left: 2px; }
.color-legend { display: flex; align-items: center; height: 34px; margin-top: 5px; font-size: 25px; color: #333; }
.cl-min { width: 42px; padding-left: 7px; }
.cl-max { margin-left: 9px; }
.ramp { width: 178px; height: 34px; border: 2px solid #a8a395; background: linear-gradient(90deg, #b9ddf1, #92c4e2 20%, #6a9fc9 50%, #4a7aa8 75%, #2a5783); }
.size-legend { display: flex; flex-direction: column; margin-top: 2px; }
.size-row { display: grid; grid-template-columns: 44px 71px; align-items: center; height: 40px; font-size: 25px; color: #333; padding-left: 5px; }
.size-row span { text-align: right; }
.dot-cell { display: flex; justify-content: center; align-items: center; height: 38px; overflow: hidden; }
.dot { display: block; flex: none; border-radius: 50%; background: #d7d7d7; border: 4px solid #b4b4b4; }
.d1 { width: 8px; height: 8px; background: #b4b4b4; border: 0; }
.d2 { width: 26px; height: 26px; }
.d3 { width: 34px; height: 34px; }
.d4 { width: 44px; height: 44px; }
```
